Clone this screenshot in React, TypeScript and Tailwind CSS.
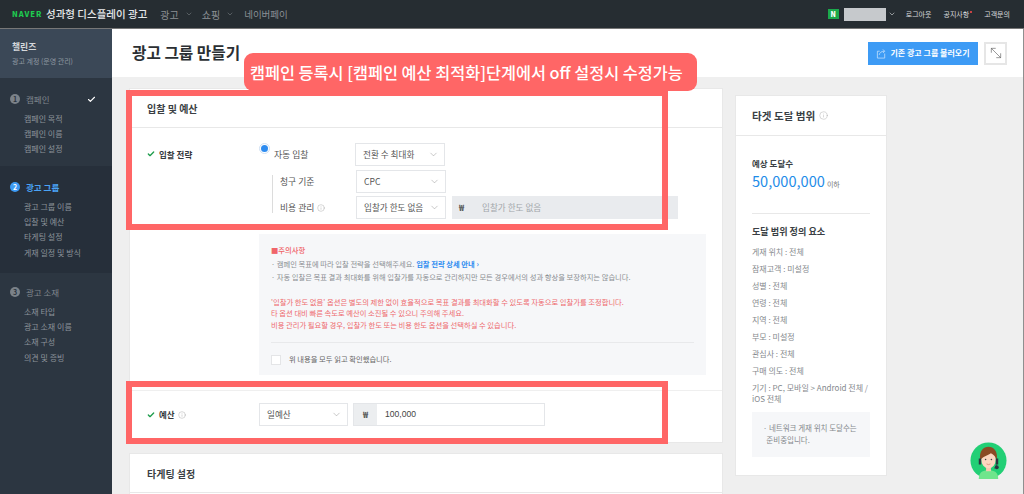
import { Check, ChevronDown, Info, MoveDiagonal2 } from "lucide-react";

const font = "font-['Noto_Sans_CJK_KR','Noto_Sans',sans-serif]";

function Step({ n, label, active, done }: { n: number; label: string; active?: boolean; done?: boolean }) {
  return (
    <div className="flex h-[12px] items-center">
      <span
        className={
          "flex h-[10px] w-[10px] items-center justify-center rounded-full text-[7px] font-bold leading-none " +
          (active ? "bg-[#3d9bf5] text-white" : "bg-[#7b8289] text-[#2a3440]")
        }
      >
        {n}
      </span>
      <span className={"ml-[6px] text-[8.5px] leading-none " + (active ? "font-bold text-[#4aa3f7]" : "text-[#80878e]")}>{label}</span>
      {done && <Check size={9} strokeWidth={3} className="ml-[38px] text-white" />}
    </div>
  );
}

function SideSection({ n, label, items, active, done, className }: { n: number; label: string; items: string[]; active?: boolean; done?: boolean; className: string }) {
  return (
    <div className={"pl-[10px] " + className}>
      <Step n={n} label={label} active={active} done={done} />
      <ul className="mt-[6px] flex flex-col pl-[14px]">
        {items.map((item) => (
          <li key={item} className="flex h-[15.3px] items-center text-[8px] leading-none text-[#8d949b]">
            {item}
          </li>
        ))}
      </ul>
    </div>
  );
}

function Select({ value, className }: { value: string; className: string }) {
  return (
    <div className={"flex h-[23px] items-center justify-between border border-[#e4e6e9] bg-white pl-[7px] pr-[5px] text-[8.6px] text-[#555] " + className}>
      <span>{value}</span>
      <ChevronDown size={11} strokeWidth={1} className="text-[#888]" />
    </div>
  );
}

function Avatar() {
  return (
    <svg viewBox="0 0 38 38" className="h-[37px] w-[37px]">
      <circle cx="19" cy="19" r="18.5" fill="#22cf75" />
      <path d="M9 38c0-7 4-9 10-9s10 2 10 9z" fill="#6fe58c" />
      <rect x="16.5" y="23" width="5" height="7" fill="#f6c9b0" />
      <ellipse cx="19" cy="18" rx="7.5" ry="9" fill="#fbd6c0" />
      <path d="M10.5 19C9 9 14 5 19 5s10 4 8.500 14c-1-4-3-6-6-7.500-3 2.500-9 3-11 7.500z" fill="#8a4b24" />
      <path d="M9 17h2.500v6H9zM26.500 17H29v6h-2.500z" fill="#2c3440" />
      <path d="M27 23q1 3-2 4" stroke="#2c3440" strokeWidth=".7" fill="none" />
      <circle cx="27.500" cy="26" r="2" fill="#2c3440" />
      <circle cx="16" cy="18" r=".8" fill="#444" />
      <circle cx="22" cy="18" r=".8" fill="#444" />
      <path d="M17 22.500q2 1.500 4 0" stroke="#d9776a" strokeWidth=".7" fill="none" />
    </svg>
  );
}

const reach = ["게재 위치 : 전체", "잠재고객 : 미설정", "성별 : 전체", "연령 : 전체", "지역 : 전체", "부모 : 미설정", "관심사 : 전체", "구매 의도 : 전체"];

export default function App() {
  return (
    <div className={"relative flex h-[494px] w-[1024px] flex-col overflow-hidden bg-[#efefef] " + font}>
      {/* top bar */}
      <header className="flex h-[29px] shrink-0 items-center border-b border-[#777] bg-[#262d32] pl-[12px] pr-[14px]">
        <span className="w-[34px] text-[7.5px] font-black tracking-[1px] text-[#1ec94f]">NAVER</span>
        <span className="text-[10.5px] font-medium text-[#e6e8ea]">성과형 디스플레이 광고</span>
        <span className="ml-[13px] text-[10px] text-[#8b9095]">광고</span>
        <ChevronDown size={8} className="ml-[6px] text-[#6f757a]" />
        <span className="ml-[9px] text-[10px] text-[#8b9095]">쇼핑</span>
        <ChevronDown size={8} className="ml-[6px] text-[#6f757a]" />
        <span className="ml-[10px] text-[9.5px] text-[#8b9095]">네이버페이</span>
        <span className="ml-auto flex h-[10px] w-[11px] items-center justify-center bg-[#1ba94c] text-[7px] font-black leading-none text-white">N</span>
        <span className="ml-[5px] h-[13px] w-[42px] bg-[#c6c9cc] blur-[0.5px]" />
        <ChevronDown size={8} className="ml-[2px] text-[#c9ccce]" />
        <span className="ml-[10px] text-[7px] text-[#d8dadc]">로그아웃</span>
        <span className="relative ml-[12px] text-[7px] text-[#d8dadc]">
          공지사항
          <span className="absolute -right-[3px] top-[2px] h-[2px] w-[2px] rounded-full bg-[#ff4b4b]" />
        </span>
        <span className="ml-[15px] text-[7px] text-[#d8dadc]">고객문의</span>
      </header>

      <div className="flex min-h-0 flex-1">
        {/* sidebar */}
        <aside className="flex w-[112px] shrink-0 flex-col bg-[#2c3641]">
          <div className="h-[49px] bg-[#3b4857] pl-[12px] pt-[13px]">
            <div className="text-[8.8px] font-bold leading-[10px] text-[#d5d8db]">챌린즈</div>
            <div className="mt-[5px] text-[7px] leading-[8px] text-[#8f98a1]">광고 계정 (운영 관리)</div>
          </div>
          <SideSection className="h-[88px] pt-[15px]" n={1} label="캠페인" done items={["캠페인 목적", "캠페인 이름", "캠페인 설정"]} />
          <SideSection className="h-[107px] bg-[#262f3a] pt-[15px]" n={2} label="광고 그룹" active items={["광고 그룹 이름", "입찰 및 예산", "타게팅 설정", "게재 일정 및 방식"]} />
          <SideSection className="flex-1 pt-[13px]" n={3} label="광고 소재" items={["소재 타입", "광고 소재 이름", "소재 구성", "의견 및 증빙"]} />
        </aside>

        <main className="flex min-w-0 flex-1 flex-col border-r border-[#8f8f8f]">
          {/* page title */}
          <div className="flex h-[48px] shrink-0 items-center justify-between bg-white pl-[20px] pr-[16px]">
            <h1 className="text-[15.7px] font-bold text-[#2b2f33]">광고 그룹 만들기</h1>
            <div className="flex items-center gap-[6px]">
              <button className="flex h-[23px] w-[110px] items-center justify-center gap-[3px] bg-[#3d9bf5] text-[8px] font-bold text-white">
                <svg viewBox="0 0 12 12" className="h-[11px] w-[11px]" fill="none" stroke="#cfe6fc" strokeWidth="0.8">
                  <path d="M4 3.5H1.5v7.5h8V6" />
                  <path d="M3.5 7.5C4 5 6 3.5 9 3.5M7.5 1.5l2 2-2 2" />
                </svg>
                기존 광고 그룹 불러오기
              </button>
              <button className="flex h-[23px] w-[23px] items-center justify-center border-2 border-[#e6e6e6] bg-white">
                <MoveDiagonal2 size={16} strokeWidth={1} className="text-[#666]" />
              </button>
            </div>
          </div>

          <div className="flex min-h-0 flex-1 items-start pl-[17px]">
            {/* form column */}
            <div className="flex w-[594px] shrink-0 flex-col gap-[10px] pt-[11px]">
              <section className="border border-[#e8e8e8] bg-white">
                <h2 className="flex h-[39px] items-center border-b border-[#e8e8e8] pl-[17px] text-[10px] font-bold text-[#3a3f44]">입찰 및 예산</h2>
                <div className="flex pt-[15px]">
                  <div className="flex h-[22px] w-[129px] shrink-0 items-center pl-[17px] text-[8.5px] font-bold text-[#33373b]">
                    <Check size={8} strokeWidth={4} className="mr-[4px] text-[#1f9d4d]" />
                    입찰 전략
                  </div>
                  <div className="flex-1">
                    <div className="flex h-[23px] items-center">
                      <span className="mb-[12px] flex h-[11px] w-[11px] items-center justify-center rounded-full border border-[#cfe0f3] bg-white">
                        <span className="h-[7px] w-[7px] rounded-full bg-[#2e8cf0]" />
                      </span>
                      <span className="ml-[4px] w-[81px] text-[8.8px] text-[#555]">자동 입찰</span>
                      <Select value="전환 수 최대화" className="w-[90px]" />
                    </div>
                    <div className="relative ml-[13px] mt-[4px] flex flex-col gap-[3px] pl-[8px]">
                      <span className="absolute bottom-[6px] left-0 top-[5px] w-px bg-[#dcdcdc]" />
                      <div className="flex items-center">
                        <span className="w-[76px] text-[8.8px] text-[#555]">청구 기준</span>
                        <Select value="CPC" className="w-[90px]" />
                      </div>
                      <div className="flex items-center">
                        <span className="flex w-[76px] items-center gap-[3px] text-[8.8px] text-[#555]">
                          비용 관리
                          <Info size={8} strokeWidth={1} className="text-[#888]" />
                        </span>
                        <Select value="입찰가 한도 없음" className="w-[90px]" />
                        <div className="ml-[6px] flex h-[23px] w-[226px] items-center bg-[#e9ebee] text-[8.6px]">
                          <span className="w-[23px] pl-[7px] font-bold text-[#555]">₩</span>
                          <span className="ml-[7px] text-[#a3a7ab]">입찰가 한도 없음</span>
                        </div>
                      </div>
                    </div>
                  </div>
                </div>

                {/* notice */}
                <div className="ml-[129px] mr-[16px] mt-[15px] h-[141px] bg-[#f6f7f9] px-[12px] pt-[10px] text-[7.3px] leading-[13.5px] text-[#8a8e92]">
                  <p className="font-medium text-[#f0656a]">■주의사항</p>
                  <p>· 캠페인 목표에 따라 입찰 전략을 선택해주세요. <span className="font-bold text-[#2e8cf0]">입찰 전략 상세 안내 ›</span></p>
                  <p>· 자동 입찰은 목표 결과 최대화를 위해 입찰가를 자동으로 관리하지만 모든 경우에서의 성과 향상을 보장하지는 않습니다.</p>
                  <div className="mt-[12px] leading-[11.5px] text-[#ee6a6e]">
                    <p>'입찰가 한도 없음' 옵션은 별도의 제한 없이 효율적으로 목표 결과를 최대화할 수 있도록 자동으로 입찰가를 조정합니다.</p>
                    <p>타 옵션 대비 빠른 속도로 예산이 소진될 수 있으니 주의해 주세요.</p>
                    <p>비용 관리가 필요할 경우, 입찰가 한도 또는 비용 한도 옵션을 선택하실 수 있습니다.</p>
                  </div>
                  <div className="mt-[11px] flex items-center border-t border-[#e8e9eb] pt-[10px]">
                    <span className="h-[10px] w-[10px] border border-[#e4e5e7] bg-white" />
                    <span className="ml-[8px] text-[#666]">위 내용을 모두 읽고 확인했습니다.</span>
                  </div>
                </div>

                {/* budget */}
                <div className="mt-[15px] border-t border-[#efefef] pb-[16px] pt-[12px]">
                  <div className="flex items-center">
                    <div className="flex w-[129px] shrink-0 items-center pl-[17px] text-[8.5px] font-bold text-[#33373b]">
                      <Check size={8} strokeWidth={4} className="mr-[4px] text-[#1f9d4d]" />
                      예산
                      <Info size={8} strokeWidth={1} className="ml-[3px] text-[#888]" />
                    </div>
                    <Select value="일예산" className="w-[89px]" />
                    <div className="ml-[5px] flex h-[23px] w-[192px] items-center border border-[#e4e6e9] bg-white text-[8.6px]">
                      <span className="flex h-full w-[23px] items-center justify-center bg-[#eceef0] font-bold text-[#555]">₩</span>
                      <span className="ml-[8px] font-['Liberation_Sans',sans-serif] text-[#444]">100,000</span>
                    </div>
                  </div>
                </div>
              </section>

              <section className="h-[60px] border border-[#e8e8e8] bg-white">
                <h2 className="flex h-[39px] items-center border-b border-[#e8e8e8] pl-[17px] text-[10px] font-bold text-[#3a3f44]">타게팅 설정</h2>
              </section>
            </div>

            {/* reach column */}
            <aside className="ml-[12px] mt-[18px] h-[381px] w-[152px] shrink-0 border border-[#e8e8e8] bg-white">
              <h2 className="flex h-[40px] items-center gap-[4px] border-b border-[#e8e8e8] pl-[16px] text-[10.6px] font-bold text-[#3a3f44]">
                타겟 도달 범위
                <Info size={9} strokeWidth={1} className="text-[#999]" />
              </h2>
              <div className="px-[16px] pt-[21px]">
                <div className="text-[8.5px] font-bold leading-[12px] text-[#3a3f44]">예상 도달수</div>
                <div className="mt-[2px] flex items-baseline text-[14.6px] font-normal leading-[20px] text-[#1e8ce8]">
                  50,000,000
                  <span className="ml-[2px] text-[7px] font-normal text-[#777]">이하</span>
                </div>
                <div className="mt-[19px] border-t border-[#e8e8e8] pt-[10px]">
                  <div className="text-[9.1px] font-bold leading-[14px] text-[#3a3f44]">도달 범위 정의 요소</div>
                  <ul className="mt-[5px] text-[8px] text-[#85898d]">
                    {reach.map((r) => (
                      <li key={r} className="h-[17px] leading-[17px]">{r}</li>
                    ))}
                    <li className="pt-[3px] leading-[11px]">기기 : PC, 모바일 &gt; Android 전체 / iOS 전체</li>
                  </ul>
                  <div className="mt-[8px] h-[45px] bg-[#f6f7f9] px-[11px] pt-[10px] text-[7.5px] leading-[12px] text-[#85898d]">
                    · 네트워크 게재 위치 도달수는
                    <br />
                    &nbsp;&nbsp;준비중입니다.
                  </div>
                </div>
              </div>
            </aside>
          </div>
        </main>
      </div>

      {/* floating chat */}
      <div className="absolute left-[970px] top-[442px]">
        <Avatar />
      </div>

      {/* annotation overlay */}
      <div className="absolute left-[126px] top-[90px] h-[140px] w-[542px] border-[6px] border-[#ff6666]" />
      <div className="absolute left-[126px] top-[381px] h-[63px] w-[542px] border-[6px] border-[#ff6666]" />
      <div className="absolute left-[244px] top-[53px] flex h-[38px] w-[453px] items-center rounded-[9px] bg-[#ff6666] pl-[6px] text-[16.3px] font-medium text-white">
        캠페인 등록시 [캠페인 예산 최적화]단계에서 off 설정시 수정가능
      </div>
    </div>
  );
}
